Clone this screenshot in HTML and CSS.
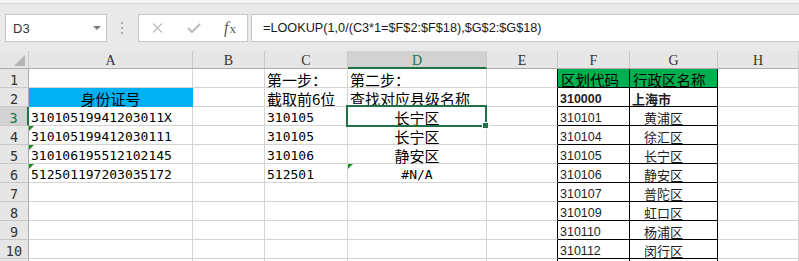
FILE: index.html
```html
<!DOCTYPE html>
<html lang="zh-CN">
<head>
<meta charset="utf-8">
<title>Excel</title>
<link rel="stylesheet" href="styles.css">
</head>
<body>
<div class="top"></div>
<div class="bar">
  <div class="namebox"><span>D3</span><svg class="caret" width="8" height="4" viewBox="0 0 8 4"><polygon points="0,0 8,0 4,4" fill="#7a7a7a"/></svg></div>
  <div class="sep"><i></i><i></i><i></i></div>
  <div class="fxbox">
    <svg class="ic-x" width="11" height="10" viewBox="0 0 11 10"><path d="M1 0.5 L10 9.5 M10 0.5 L1 9.5" stroke="#bdbdbd" stroke-width="1.3" fill="none"/></svg>
    <svg class="ic-ok" width="14" height="10" viewBox="0 0 14 10"><path d="M1 5 L5 9 L13 1" stroke="#bdbdbd" stroke-width="2.2" fill="none"/></svg>
    <span class="fx"><i>f</i>x</span>
  </div>
  <div class="formula">=LOOKUP(1,0/(C3*1=$F$2:$F$18),$G$2:$G$18)</div>
</div>
<div class="sheet">
  <div class="c h corner"><svg width="28" height="17" viewBox="0 0 28 17"><polygon points="25,4 25,15 14,15" fill="#b4b4b4"/></svg></div>
  <div class="c h">A</div><div class="c h">B</div><div class="c h">C</div><div class="c h hsel">D</div><div class="c h">E</div><div class="c h">F</div><div class="c h">G</div><div class="c h">H</div>

  <div class="c r">1</div><div class="c"></div><div class="c"></div><div class="c k">第一步：</div><div class="c k">第二步：</div><div class="c eb"></div><div class="c tb grn k">区划代码</div><div class="c tb grn k">行政区名称</div><div class="c"></div>

  <div class="c r">2</div><div class="c blue k ctr">身份证号</div><div class="c"></div><div class="c k">截取前6位</div><div class="c k">查找对应县级名称</div><div class="c eb"></div><div class="c tb num b">310000</div><div class="c tb zh b">上海市</div><div class="c"></div>

  <div class="c r rsel">3</div><div class="c">31010519941203011X</div><div class="c"></div><div class="c">310105</div><div class="c k ctr">长宁区<span class="selbox"></span><span class="handle"></span></div><div class="c eb"></div><div class="c tb num">310101</div><div class="c tb zh ind">黄浦区</div><div class="c"></div>

  <div class="c r">4</div><div class="c"><span class="tri"></span>310105199412030111</div><div class="c"></div><div class="c">310105</div><div class="c k ctr">长宁区</div><div class="c eb"></div><div class="c tb num">310104</div><div class="c tb zh ind">徐汇区</div><div class="c"></div>

  <div class="c r">5</div><div class="c"><span class="tri"></span>310106195512102145</div><div class="c"></div><div class="c">310106</div><div class="c k ctr">静安区</div><div class="c eb"></div><div class="c tb num">310105</div><div class="c tb zh ind">长宁区</div><div class="c"></div>

  <div class="c r">6</div><div class="c"><span class="tri"></span>512501197203035172</div><div class="c"></div><div class="c">512501</div><div class="c ctr"><span class="tri"></span>#N/A</div><div class="c eb"></div><div class="c tb num">310106</div><div class="c tb zh ind">静安区</div><div class="c"></div>

  <div class="c r">7</div><div class="c"></div><div class="c"></div><div class="c"></div><div class="c"></div><div class="c eb"></div><div class="c tb num">310107</div><div class="c tb zh ind">普陀区</div><div class="c"></div>

  <div class="c r">8</div><div class="c"></div><div class="c"></div><div class="c"></div><div class="c"></div><div class="c eb"></div><div class="c tb num">310109</div><div class="c tb zh ind">虹口区</div><div class="c"></div>

  <div class="c r">9</div><div class="c"></div><div class="c"></div><div class="c"></div><div class="c"></div><div class="c eb"></div><div class="c tb num">310110</div><div class="c tb zh ind">杨浦区</div><div class="c"></div>

  <div class="c r">10</div><div class="c"></div><div class="c"></div><div class="c"></div><div class="c"></div><div class="c eb"></div><div class="c tb num">310112</div><div class="c tb zh ind">闵行区</div><div class="c"></div>

  <div class="c r"></div><div class="c"></div><div class="c"></div><div class="c"></div><div class="c"></div><div class="c eb"></div><div class="c tb"></div><div class="c tb"></div><div class="c"></div>
</div>
</body>
</html>
```
FILE: styles.css
```css
* { box-sizing: border-box; margin: 0; padding: 0; }
html, body { width: 799px; height: 261px; overflow: hidden; background: #fff; }
body { font-family: "Liberation Sans", "Noto Sans CJK SC", sans-serif; }

.top { height: 4px; background: #f3f3f3; border-bottom: 1px solid #d6d6d6; }

.bar {
  height: 47px;
  background: #e9e9e9;
  display: flex;
  align-items: flex-start;
  padding: 10px 0 0 5px;
}
.namebox {
  width: 102px; height: 28px;
  background: #fff;
  border: 1px solid #c6c6c6;
  display: flex; align-items: center; justify-content: space-between;
  padding: 0 5px 0 7px;
  font-size: 13px; color: #333;
}
.sep {
  width: 31px; height: 28px;
  display: flex; flex-direction: column; justify-content: center; gap: 3px;
  padding-left: 14px;
}
.sep i { display: block; width: 2px; height: 2px; background: #a8a8a8; }
.fxbox {
  width: 110px; height: 28px;
  background: #fff;
  border: 1px solid #c6c6c6;
  display: flex; align-items: center;
}
.ic-x { margin-left: 13px; }
.ic-ok { margin-left: 24px; }
.fx {
  margin-left: 23px;
  font-family: "Liberation Serif", serif;
  font-size: 13px; color: #5a5a5a;
}
.fx i { font-size: 16px; margin-right: 1px; }
.formula {
  flex: 1;
  margin-left: 3px;
  height: 28px;
  background: #fff;
  border: 1px solid #c6c6c6; border-right: none;
  padding-left: 11px;
  font-size: 12.7px; line-height: 26px; color: #1a1a1a;
  white-space: nowrap;
}

.sheet {
  display: grid;
  grid-template-columns: 29px 164px 72px 83px 139px 71px 72px 88px 81px;
  grid-template-rows: 18px repeat(11, 19px);
}
.c {
  position: relative;
  border-right: 1px solid #d4d4d4;
  border-bottom: 1px solid #d4d4d4;
  padding: 2px 0 0 2px;
  line-height: 18px;
  white-space: nowrap;
  font-family: "DejaVu Sans Mono", "Noto Sans CJK SC", monospace;
  font-size: 13px;
  color: #000;
}
.k { font-family: "Noto Sans CJK SC", sans-serif; font-size: 15px; }
.ctr { text-align: center; padding-left: 0; }

.h {
  background: #e6e6e6;
  border-right-color: #c8c8c8;
  border-bottom-color: #ababab;
  text-align: center;
  padding: 2px 0 0 0;
  line-height: 15px;
  font-family: "Liberation Serif", serif;
  font-size: 14px; color: #333;
}
.corner { padding: 0; }
.corner svg { display: block; }
.hsel { background: #d2d2d2; color: #217346; border-bottom: 2px solid #217346; }

.r {
  background: #e6e6e6;
  border-right-color: #ababab;
  border-bottom-color: #c8c8c8;
  text-align: center;
  padding-left: 0;
  font-size: 13.5px; color: #333;
}
.rsel { background: #d2d2d2; color: #217346; border-right: 2px solid #217346; }

.blue { background: #00b0f0; border-right-color: #00b0f0; border-bottom-color: #00b0f0; }
.grn { background: #00b050; }
.eb { border-right-color: #000; }
.tb { border-right-color: #000; border-bottom-color: #000; }
.num { font-family: "Liberation Sans", sans-serif; font-size: 12.5px; color: #1e1e1e; }
.zh { font-family: "Noto Sans CJK SC", sans-serif; font-size: 13px; color: #1e1e1e; }
.tb.k { font-size: 14.5px; padding-left: 3px; }
.ind { padding-left: 14px; }
.b { font-weight: 700; }

.tri {
  position: absolute; left: 0; top: 0;
  width: 0; height: 0;
  border-top: 5px solid #1f8a1f;
  border-right: 5px solid transparent;
}
.selbox {
  position: absolute; left: -2px; top: -2px; z-index: 2;
  width: 141px; height: 22px;
  border: 2px solid #217346;
}
.handle {
  position: absolute; left: 134px; top: 15px; z-index: 3;
  width: 7px; height: 7px;
  background: #217346;
  border: 1px solid #fff;
}
```
